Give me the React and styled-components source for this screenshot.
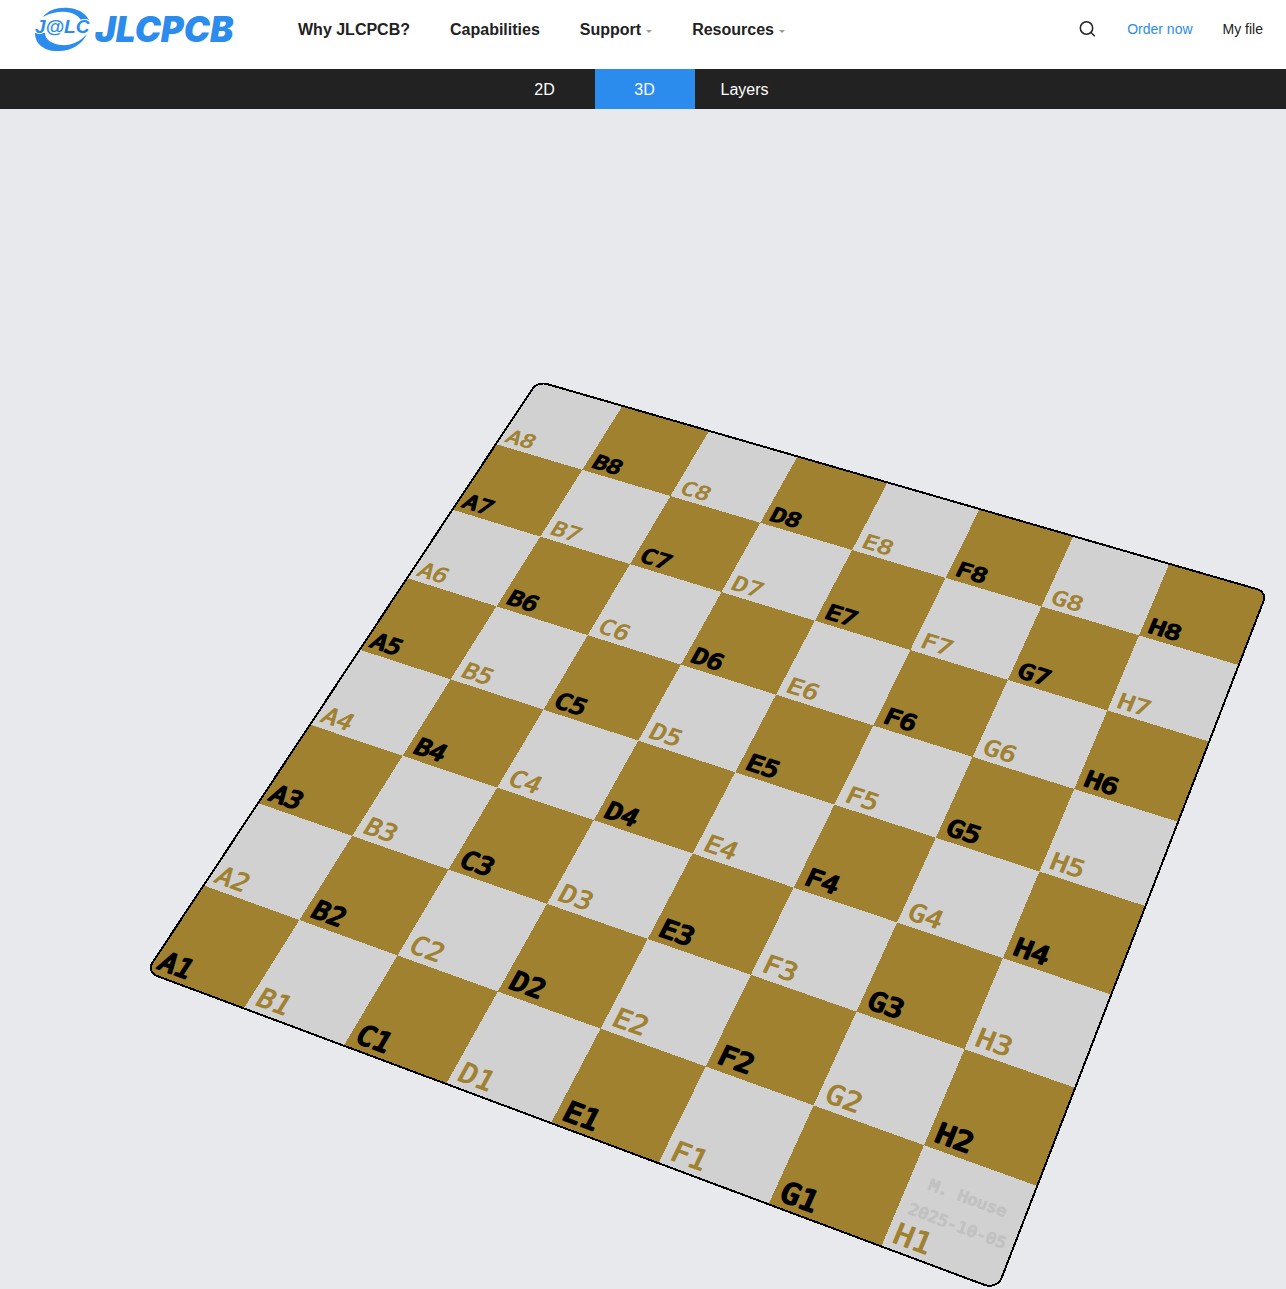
import React from "react";
import styled, { createGlobalStyle } from "styled-components";

const GlobalStyle = createGlobalStyle`
  * { box-sizing: border-box; }
  body { margin: 0; background: #e8e9ed; font-family: "Liberation Sans", Arial, sans-serif; }
`;

const Page = styled.div`
  display: flex;
  flex-direction: column;
  min-height: 100vh;
`;

const Header = styled.header`
  display: flex;
  align-items: center;
  height: 69px;
  padding: 0 23px 10px 34px;
  background: #fff;
`;

const LogoLink = styled.a`
  display: flex;
  margin-right: 64px;
`;

const MainNav = styled.nav`
  display: flex;
  gap: 40px;
`;

const NavLink = styled.a`
  display: flex;
  align-items: center;
  gap: 5px;
  color: #222;
  font-size: 16px;
  font-weight: 700;
  line-height: 20px;
  text-decoration: none;
  white-space: nowrap;
`;

const Caret = styled.span`
  width: 0;
  margin-top: 4px;
  border: 3px solid transparent;
  border-top-color: #999;
  border-bottom: 0;
`;

const Actions = styled.div`
  display: flex;
  align-items: center;
  gap: 30px;
  margin-left: auto;
  padding-bottom: 2px;
`;

const SearchButton = styled.button`
  display: flex;
  padding: 0;
  border: 0;
  background: none;
  color: #222;
  cursor: pointer;
`;

const ActionLink = styled.a`
  color: ${(p) => (p.$accent ? "#2b8ced" : "#222")};
  font-size: 14px;
  line-height: 20px;
  text-decoration: none;
  white-space: nowrap;
`;

const Tabs = styled.nav`
  display: flex;
  justify-content: center;
  height: 40px;
  padding-left: 4px;
  background: #222;
`;

const Tab = styled.button`
  width: 100px;
  padding: 2px 1px 0 0;
  border: 0;
  background: ${(p) => (p.$active ? "#2b8ced" : "transparent")};
  color: #fff;
  font: 16px/38px "Liberation Sans", Arial, sans-serif;
  cursor: pointer;
`;

const Stage = styled.main`
  flex: 1;
  display: flex;
  background: #e8e9ed;
`;

const BoardView = styled.svg`
  display: block;
  width: 100%;
  height: auto;
`;

const Label = styled.text`
  font-family: "DejaVu Sans Mono", monospace;
  font-size: 26px;
  fill: ${(p) => p.$color};
  stroke: ${(p) => p.$color};
  stroke-width: ${(p) => (p.$heavy ? 2 : 1)}px;
  stroke-linejoin: round;
`;

const Signature = styled.text`
  font-family: "DejaVu Sans Mono", monospace;
  font-size: 14px;
  fill: #c1c1c2;
  stroke: #c1c1c2;
  stroke-width: 1px;
  stroke-linejoin: round;
`;

const MarkText = styled.text`
  font-family: "Liberation Sans", Arial, sans-serif;
  font-size: 19px;
  font-weight: 700;
  font-style: italic;
  stroke: #fff;
  stroke-width: 2px;
  paint-order: stroke;
`;

const WordText = styled.text`
  font-family: Inter, "Liberation Sans", sans-serif;
  font-size: 35px;
  font-weight: 900;
  font-style: italic;
`;

const GOLD = "#a08130";
const SILVER = "#d1d1d1";
const FILES = ["A", "B", "C", "D", "E", "F", "G", "H"];

// Screen positions of four inner grid crossings: (1,1) (7,1) (7,7) (1,7).
const ANCHORS = [
  [582.3, 469.8],
  [1139, 635.4],
  [924, 1145.2],
  [299.4, 920],
];

function makeProjection([[x0, y0], [x1, y1], [x2, y2], [x3, y3]]) {
  const dx1 = x1 - x2, dx2 = x3 - x2, dx3 = x0 - x1 + x2 - x3;
  const dy1 = y1 - y2, dy2 = y3 - y2, dy3 = y0 - y1 + y2 - y3;
  const den = dx1 * dy2 - dx2 * dy1;
  const g = (dx3 * dy2 - dx2 * dy3) / den;
  const h = (dx1 * dy3 - dx3 * dy1) / den;
  const a = x1 - x0 + g * x1, b = x3 - x0 + h * x3;
  const d = y1 - y0 + g * y1, e = y3 - y0 + h * y3;
  return (u, v) => {
    const s = (u - 1) / 6, t = (v - 1) / 6;
    const w = g * s + h * t + 1;
    return [(a * s + b * t + x0) / w, (d * s + e * t + y0) / w];
  };
}

const project = makeProjection(ANCHORS);
const toPoints = (list) => list.map(([u, v]) => project(u, v).map((n) => n.toFixed(1)).join(",")).join(" ");

// Local flat frame at a board position; 100 units make one square.
function frameAt(u, v, cu, cv) {
  const step = 0.05;
  const [cx, cy] = project(cu, cv);
  const [ux, uy] = project(cu + step, cv);
  const [vx, vy] = project(cu, cv + step);
  const a = (ux - cx) / step, b = (uy - cy) / step;
  const c = (vx - cx) / step, d = (vy - cy) / step;
  const e = cx + a * (u - cu) + c * (v - cv);
  const f = cy + b * (u - cu) + d * (v - cv);
  return `matrix(${a / 100} ${b / 100} ${c / 100} ${d / 100} ${e} ${f})`;
}

const RADIUS = 0.11;
const FAR = 8 - RADIUS;
const outline = [[FAR, RADIUS, -90], [FAR, FAR, 0], [RADIUS, FAR, 90], [RADIUS, RADIUS, 180]]
  .flatMap(([cx, cy, start]) =>
    Array.from({ length: 10 }, (_, i) => {
      const t = ((start + i * 10) * Math.PI) / 180;
      return [cx + RADIUS * Math.cos(t), cy + RADIUS * Math.sin(t)];
    })
  );

const cells = FILES.flatMap((file, u) =>
  Array.from({ length: 8 }, (_, v) => ({ name: `${file}${8 - v}`, u, v, gold: (u + v) % 2 === 1 }))
);

function Board() {
  return (
    <BoardView viewBox="0 109 1286 1180" role="img" aria-label="Chess board, 3D view">
      <clipPath id="board-edge"><polygon points={toPoints(outline)} /></clipPath>
      <g clipPath="url(#board-edge)" shapeRendering="crispEdges">
        <polygon points={toPoints([[0, 0], [8, 0], [8, 8], [0, 8]])} fill={SILVER} />
        {cells.filter((c) => c.gold).map(({ name, u, v }) => (
          <polygon key={name} points={toPoints([[u, v], [u + 1, v], [u + 1, v + 1], [u, v + 1]])} fill={GOLD} />
        ))}
      </g>
      <polygon points={toPoints(outline)} fill="none" stroke="#000" strokeWidth="2" strokeLinejoin="round" shapeRendering="crispEdges" />
      {cells.map(({ name, u, v, gold }) => (
        <Label key={name} $heavy={gold} $color={gold ? "#000" : GOLD} transform={frameAt(u + 0.06, v + 0.93, u + 0.22, v + 0.85)}>
          {name}
        </Label>
      ))}
      <Signature transform={frameAt(7.17, 7.37, 7.55, 7.35)}>M. House</Signature>
      <Signature transform={frameAt(7.09, 7.64, 7.55, 7.65)}>2025-10-05</Signature>
    </BoardView>
  );
}

function Logo() {
  return (
    <svg width="200" height="46" viewBox="34 6 200 46" role="img" aria-label="JLCPCB" fill="#2b8ced">
      <path d="M43 16C48 9 58 6 69 7C80 8 88 14 90 22L82 22C80 12 62 6 43 16Z" />
      <path d="M35 32C35 44 46 51 59 50C72 50 82 43 87 33C80 41 70 45 61 44C51 43 45 38 45 32Z" />
      <MarkText x="35" y="32">J@LC</MarkText>
      <WordText x="95" y="41">JLCPCB</WordText>
    </svg>
  );
}

export default function App() {
  return (
    <Page>
      <GlobalStyle />
      <Header>
        <LogoLink href="#home"><Logo /></LogoLink>
        <MainNav>
          <NavLink href="#why">Why JLCPCB?</NavLink>
          <NavLink href="#capabilities">Capabilities</NavLink>
          <NavLink href="#support">Support<Caret /></NavLink>
          <NavLink href="#resources">Resources<Caret /></NavLink>
        </MainNav>
        <Actions>
          <SearchButton aria-label="Search">
            <svg width="18" height="18" viewBox="0 0 18 18" fill="none" stroke="currentColor" strokeWidth="1.5">
              <circle cx="7.5" cy="8" r="6.2" /><path d="M12 12.5L15.8 16.3" />
            </svg>
          </SearchButton>
          <ActionLink href="#order" $accent>Order now</ActionLink>
          <ActionLink href="#file">My file</ActionLink>
        </Actions>
      </Header>
      <Tabs aria-label="View">
        <Tab>2D</Tab>
        <Tab $active aria-current="page">3D</Tab>
        <Tab>Layers</Tab>
      </Tabs>
      <Stage><Board /></Stage>
    </Page>
  );
}
